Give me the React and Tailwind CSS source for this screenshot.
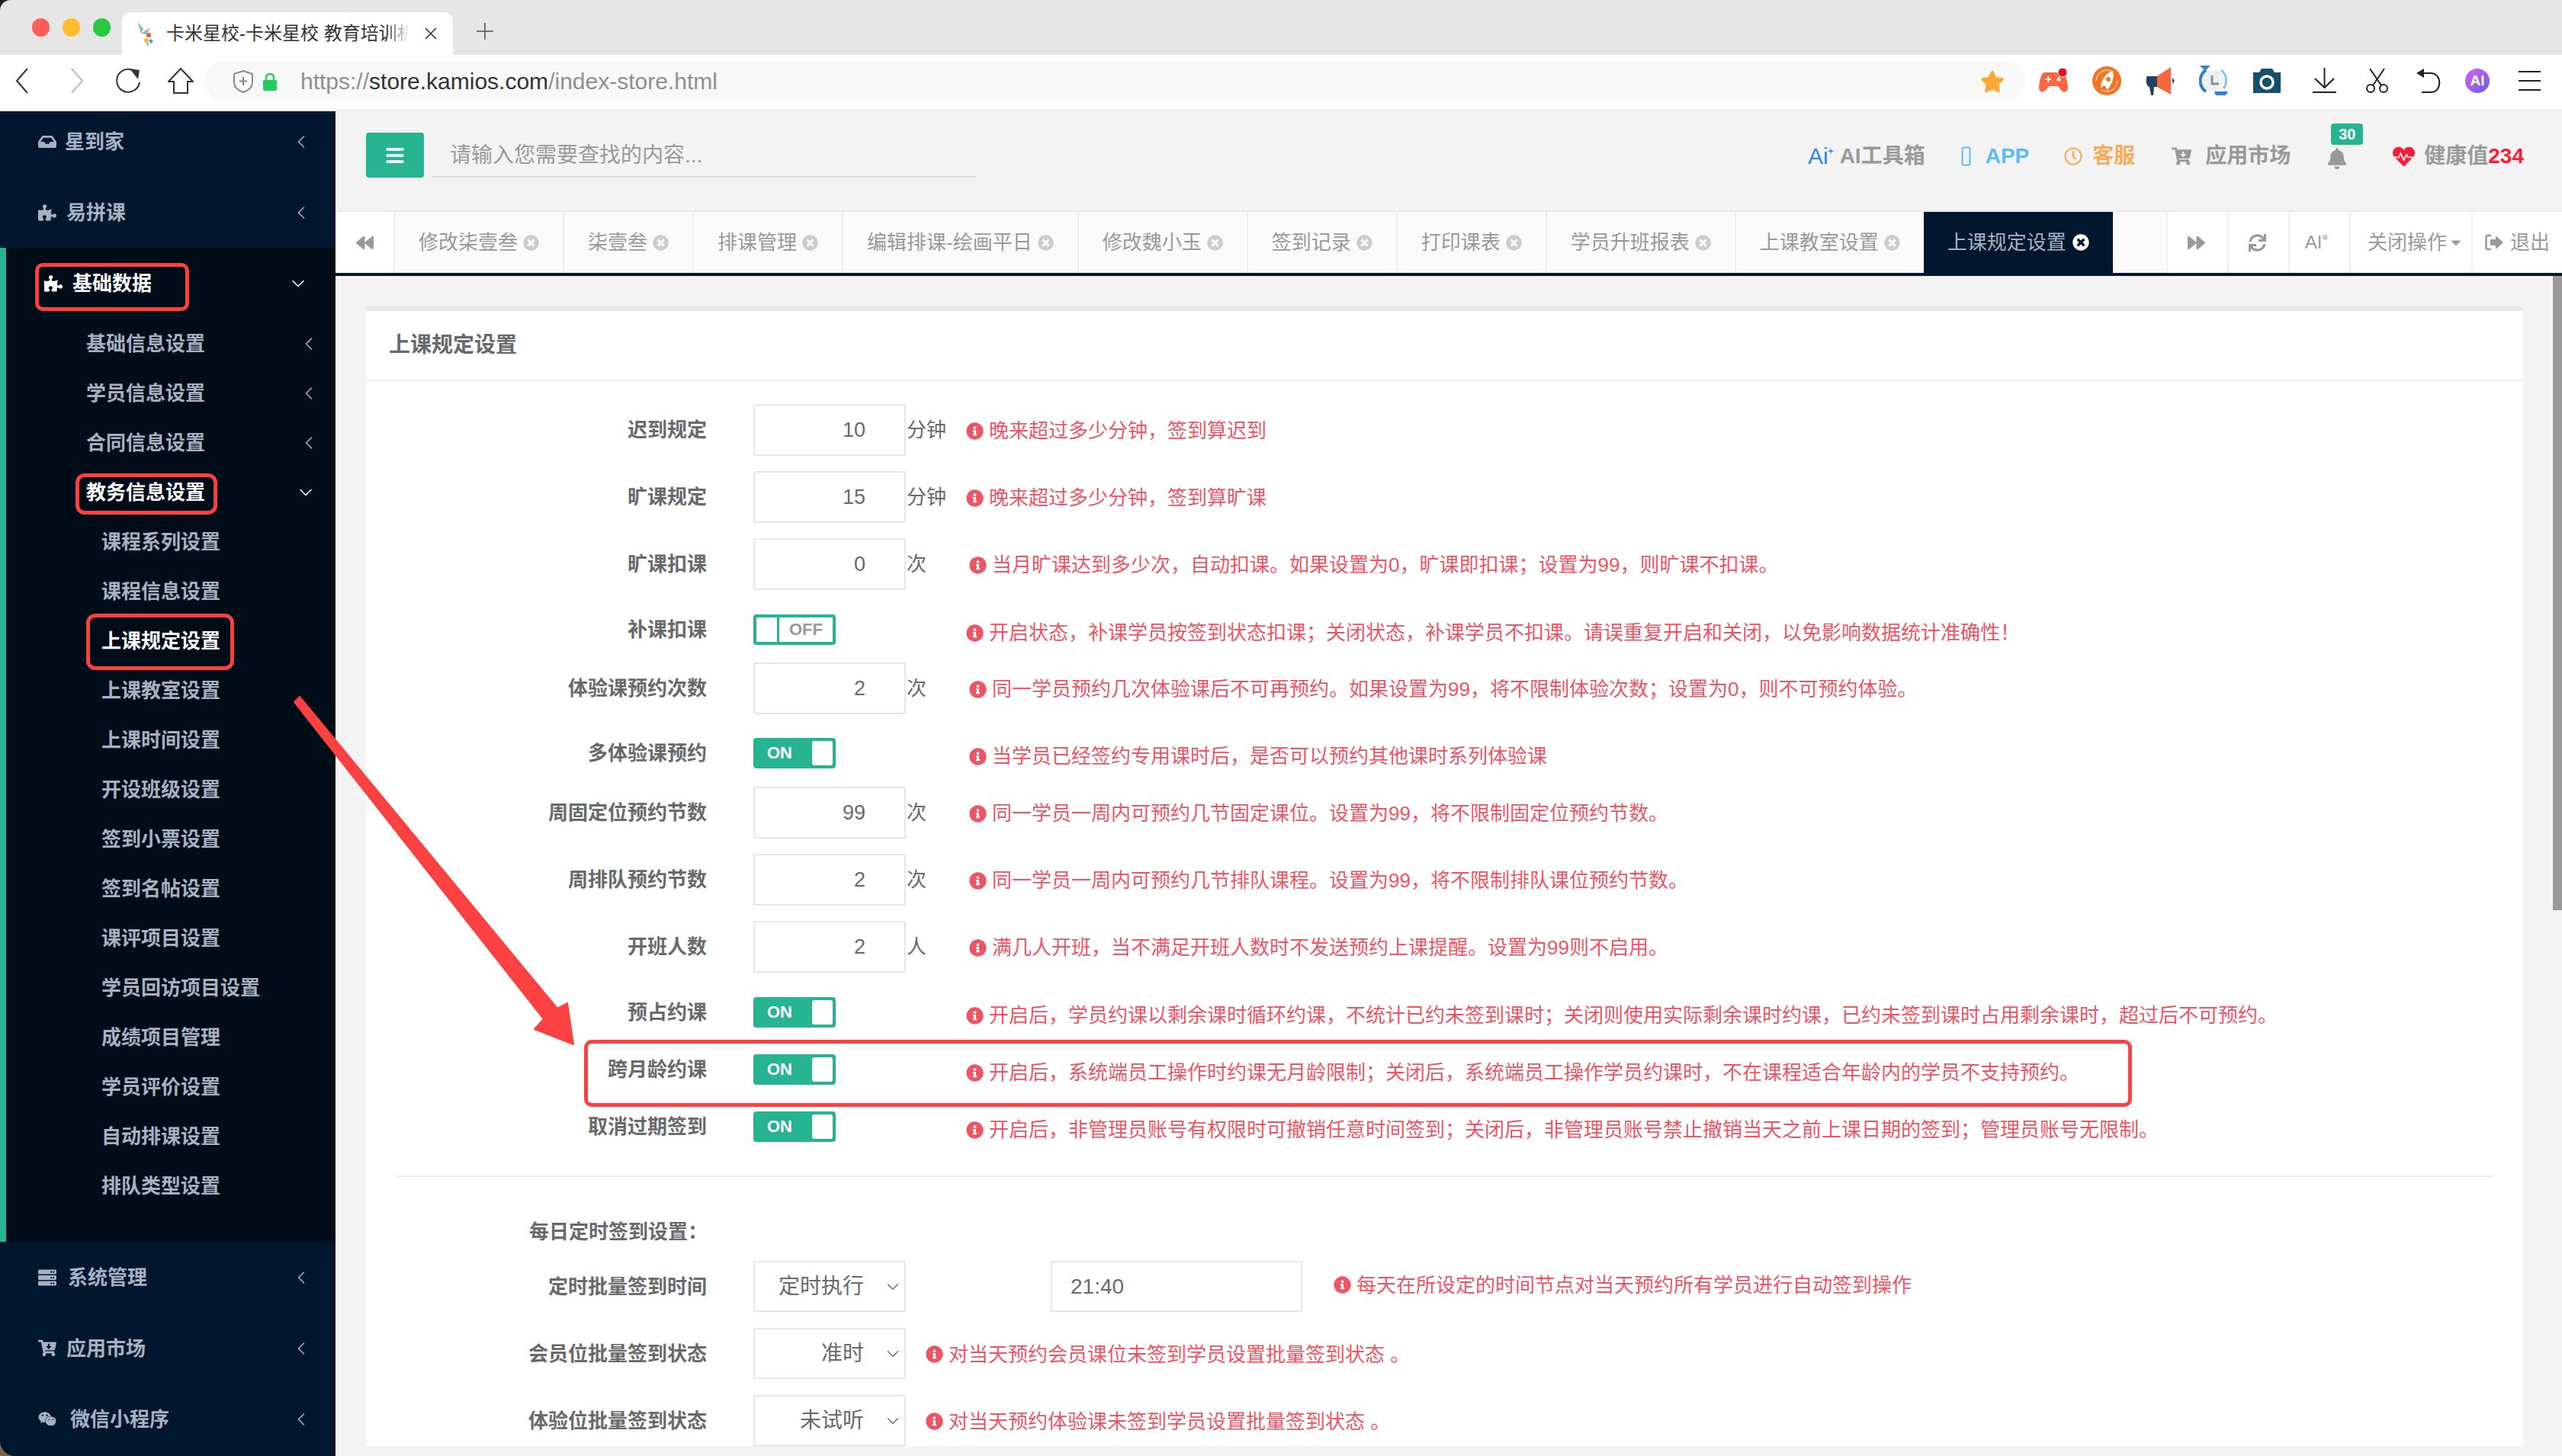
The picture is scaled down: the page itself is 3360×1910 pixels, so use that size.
import React from 'react';
import { FaBackward, FaBars, FaBell, FaCartArrowDown, FaForward, FaHeartbeat, FaInbox, FaInfoCircle, FaPuzzlePiece, FaRegClock, FaServer, FaSync, FaTimesCircle, FaWeixin, FaCaretDown, FaStar } from 'react-icons/fa';
import { ChevronLeft, ChevronDown } from 'lucide-react';

const FONT = "[font-family:'Liberation_Sans','Noto_Sans_CJK_SC',sans-serif]";

function BrowserChrome() {
    return (
        <div className="shrink-0">
            <div className="h-[72px] bg-[#e6e6e6] rounded-tl-[14px] flex items-end relative">
                <div className="flex items-center gap-[17px] absolute left-[42px] top-[24px]">
                    <span className="w-[23px] h-[24px] rounded-full bg-[#ff5f57]" />
                    <span className="w-[23px] h-[24px] rounded-full bg-[#febc2e]" />
                    <span className="w-[23px] h-[24px] rounded-full bg-[#28c840]" />
                </div>
                <div className="ml-[160px] w-[434px] h-[56px] bg-white rounded-t-[12px] flex items-center pl-[17px]">
                    <svg width="26" height="36" viewBox="0 0 26 36" className="shrink-0">
                        <path d="M3 2 L11 12 L8 18 Z" fill="#7cc4b0" />
                        <path d="M8 18 L20 10 L15 19 Z" fill="#8fb8a0" />
                        <circle cx="18" cy="20" r="3" fill="#e9573f" />
                        <circle cx="15" cy="27" r="3" fill="#f6bb42" />
                        <circle cx="21" cy="28" r="2.5" fill="#48a0dc" />
                        <path d="M15 30 L17 36 L18 30 Z" fill="#8cc152" />
                    </svg>
                    <div className="relative ml-[15px] w-[319px] h-[34px] overflow-hidden text-[24px] leading-[34px] text-[#333]">
                        <span className="block w-[330px] whitespace-nowrap">卡米星校-卡米星校 教育培训机</span>
                        <div className="absolute right-0 top-0 h-full w-[30px] bg-gradient-to-r from-transparent to-white" />
                    </div>
                    <svg width="18" height="18" viewBox="0 0 18 18" className="ml-[19px]" stroke="#333" strokeWidth="1.6">
                        <path d="M2 2 L16 16 M16 2 L2 16" />
                    </svg>
                </div>
                <svg width="24" height="24" viewBox="0 0 24 24" className="ml-[30px] mb-[19px]" stroke="#555" strokeWidth="1.6">
                    <path d="M12 1 V23 M1 12 H23" />
                </svg>
            </div>
            <div className="h-[72px] bg-white flex items-center relative">
                <svg width="17" height="34" viewBox="0 0 17 34" className="ml-[20px] mb-[4px]" fill="none" stroke="#333" strokeWidth="2">
                    <path d="M16 1 L2 17 L16 33" />
                </svg>
                <svg width="17" height="34" viewBox="0 0 17 34" className="ml-[56px] mb-[4px]" fill="none" stroke="#bbb" strokeWidth="2">
                    <path d="M1 1 L15 17 L1 33" />
                </svg>
                <svg width="35" height="34" viewBox="0 0 35 34" className="ml-[40px] mb-[4px]" fill="none" stroke="#333" strokeWidth="2">
                    <path d="M24 3 A15 15 0 1 0 33 19" />
                    <path d="M20 1 L33 3 L31 15 Z" fill="#333" stroke="none" />
                </svg>
                <svg width="34" height="34" viewBox="0 0 34 34" className="ml-[35px] mb-[4px]" fill="none" stroke="#333" strokeWidth="2">
                    <path d="M17 1 L33 18 H26 V33 H8 V18 H1 Z" />
                </svg>
                <div className="absolute left-[268px] top-[8px] w-[2388px] h-[53px] rounded-[26px] bg-[#f8f8f8] flex items-center">
                    <svg width="28" height="32" viewBox="0 0 28 32" className="ml-[37px]" fill="none" stroke="#888" strokeWidth="2">
                        <path d="M14 2 L26 6 V17 C26 24 20 28 14 30 C8 28 2 24 2 17 V6 Z" />
                        <path d="M14 10 V21 M9 15.5 H19" />
                    </svg>
                    <svg width="20" height="24" viewBox="0 0 20 24" className="ml-[11px]">
                        <path d="M5 11 V7 A5 5 0 0 1 15 7 V11" fill="none" stroke="#22cc5e" strokeWidth="2.5" />
                        <rect x="1" y="10" width="18" height="14" rx="2" fill="#22cc5e" />
                    </svg>
                    <div className="ml-[30px] text-[30px] leading-[40px] text-[#8f8f8f]">
                        https://<span className="text-[#333]">store.kamios.com</span>/index-store.html
                    </div>
                    <FaStar size={32} className="absolute right-[27px] top-[11px] text-[#ffa733]" />
                </div>
                <div className="absolute left-[2673px] top-[14px] flex items-center">
                    <svg width="40" height="33" viewBox="0 0 40 33">
                        <path d="M8 6 H32 C36 6 39 20 39 27 C38 33 32 33 29 28 L26 24 H14 L11 28 C8 33 2 33 1 27 C1 20 4 6 8 6 Z" fill="#ff6640" />
                        <path d="M9 15 H17 M13 11 V19" stroke="#fff" strokeWidth="2" />
                        <circle cx="27" cy="15" r="2.5" fill="#fff" />
                        <circle cx="32" cy="6" r="6" fill="#e81123" stroke="#fff" />
                    </svg>
                    <svg width="38" height="38" viewBox="0 0 38 38" className="ml-[31px]">
                        <circle cx="19" cy="19" r="19" fill="#f47521" />
                        <circle cx="19" cy="19" r="14" fill="none" stroke="#fff" strokeWidth="1" strokeDasharray="30 14" />
                        <path d="M27 6 C18 9 12 16 11 28 L16 25 L20 31 C26 23 29 15 27 6 Z" fill="#fff" />
                        <circle cx="21" cy="17" r="3" fill="#f47521" />
                    </svg>
                    <svg width="38" height="38" viewBox="0 0 38 38" className="ml-[32px]">
                        <path d="M2 13 H15 V27 H11 L10 38 H7 L5 27 C0 27 0 13 2 13 Z" fill="#25415e" />
                        <path d="M15 13 L33 1 V37 L15 27 Z" fill="#f7673c" />
                        <path d="M35 15 L38 19 L35 23 Z" fill="#25415e" />
                    </svg>
                    <svg width="38" height="39" viewBox="0 0 38 39" className="ml-[32px]">
                        <circle cx="19" cy="20" r="14" fill="#eef1f4" />
                        <path d="M9 6 A17 17 0 0 0 9 34" fill="none" stroke="#2f7ed8" strokeWidth="4" />
                        <path d="M29 6 A17 17 0 0 1 32 30" fill="none" stroke="#8fc0ee" strokeWidth="3" />
                        <path d="M17 13 V24 H26" fill="none" stroke="#8a8f94" strokeWidth="3" />
                        <path d="M20 34 H38 L35 39 H22 Z" fill="#2f7ed8" />
                        <path d="M1 0 H15 L8 7 Z" fill="#2f7ed8" />
                    </svg>
                    <svg width="38" height="32" viewBox="0 0 38 32" className="ml-[32px]">
                        <path d="M1 5 H9 L12 0 H26 L29 5 H37 V32 H1 Z" fill="#12506c" />
                        <circle cx="19" cy="18" r="8" fill="none" stroke="#fff" strokeWidth="3.5" />
                    </svg>
                    <svg width="31" height="33" viewBox="0 0 31 33" className="ml-[41px]" fill="none" stroke="#222" strokeWidth="2">
                        <path d="M15.5 0 V26 M3 14 L15.5 26 L28 14 M0 32 H31" />
                    </svg>
                    <svg width="31" height="33" viewBox="0 0 31 33" className="ml-[38px]" fill="none" stroke="#222" strokeWidth="2">
                        <path d="M6 1 L21 23 M25 1 L10 23" />
                        <circle cx="7" cy="27" r="5" />
                        <circle cx="24" cy="27" r="5" />
                    </svg>
                    <svg width="32" height="32" viewBox="0 0 32 32" className="ml-[36px]" fill="none" stroke="#222" strokeWidth="2">
                        <path d="M8 6 H19 C34 6 34 31 19 31 H7" />
                        <path d="M10 0 L0 6 L10 12 Z" fill="#222" stroke="none" />
                    </svg>
                    <div className="ml-[32px] w-[32px] h-[32px] rounded-full bg-gradient-to-br from-[#e05cf0] to-[#5a5cf0] text-white text-[19px] leading-[32px] text-center font-bold">AI</div>
                    <svg width="29" height="26" viewBox="0 0 29 26" className="ml-[38px]" stroke="#222" strokeWidth="2">
                        <path d="M0 1 H29 M0 13 H29 M0 25 H29" />
                    </svg>
                </div>
            </div>
            <div className="h-[2px] bg-[#e7eaec]" />
        </div>
    );
}

function SideItem({ icon, label, boxClass = 'h-[93px]', textClass = 'ml-[13px]' }) {
    return (
        <div className={`flex items-center pl-[50px] pr-[31px] text-[#a7b1c2] ${boxClass}`}>
            <span className="w-[24px] flex items-center">{icon}</span>
            <span className={`text-[26px] leading-[36px] font-semibold ${textClass}`}>{label}</span>
            <ChevronLeft size={28} strokeWidth={1.3} className="ml-auto" />
        </div>
    );
}

const SUB_MENU = ['基础信息设置', '学员信息设置', '合同信息设置'];
const SUB_SUB_MENU = ['课程系列设置', '课程信息设置', '上课规定设置', '上课教室设置', '上课时间设置', '开设班级设置', '签到小票设置', '签到名帖设置', '课评项目设置', '学员回访项目设置', '成绩项目管理', '学员评价设置', '自动排课设置', '排队类型设置'];

function Sidebar() {
    return (
        <aside className="w-[440px] shrink-0 bg-[#00172d] rounded-bl-[20px] overflow-hidden">
            <SideItem icon={<FaInbox size={24} />} label="星到家" boxClass="h-[86px] pb-[6px]" textClass="ml-[11px]" />
            <SideItem icon={<FaPuzzlePiece size={24} />} label="易拼课" />
            <div className="bg-[#000c17] border-l-[8px] border-[#26b493] pb-[41px]">
                <div className="h-[93px] flex items-center pl-[50px] pr-[35px] text-white">
                    <FaPuzzlePiece size={24} />
                    <span className="ml-[13px] text-[26px] leading-[36px] font-bold">基础数据</span>
                    <ChevronDown size={28} strokeWidth={1.3} className="ml-auto" />
                </div>
                {SUB_MENU.map((m) => (
                    <div key={m} className="h-[65px] flex items-center pl-[105px] pr-[21px] text-[#a7b1c2]">
                        <span className="text-[26px] leading-[36px] font-semibold">{m}</span>
                        <ChevronLeft size={28} strokeWidth={1.3} className="ml-auto" />
                    </div>
                ))}
                <div className="h-[65px] flex items-center pl-[105px] pr-[25px] text-white">
                    <span className="text-[26px] leading-[36px] font-bold">教务信息设置</span>
                    <ChevronDown size={28} strokeWidth={1.3} className="ml-auto" />
                </div>
                {SUB_SUB_MENU.map((m) => (
                    <div key={m} className={`h-[65px] flex items-center pl-[125px] text-[26px] leading-[36px] ${m === '上课规定设置' ? 'text-white font-bold' : 'text-[#a7b1c2] font-semibold'}`}>
                        {m}
                    </div>
                ))}
            </div>
            <SideItem icon={<FaServer size={26} />} label="系统管理" textClass="ml-[15px]" />
            <SideItem icon={<FaCartArrowDown size={25} />} label="应用市场" />
            <SideItem icon={<FaWeixin size={29} />} label="微信小程序" textClass="ml-[18px]" />
        </aside>
    );
}

function TopBar() {
    return (
        <div className="h-[130px] shrink-0 flex items-start pl-[40px] pr-[50px] pt-[28px]">
            <div className="w-[76px] h-[59px] rounded-[4px] bg-[#26b493] flex items-center justify-center text-white">
                <FaBars size={26} />
            </div>
            <div className="ml-[10px] w-[714px] h-[59px] border-b-[2px] border-[#dcdcdc] pl-[24px] text-[28px] leading-[60px] text-[#999]">
                请输入您需要查找的内容...
            </div>
            <div className="ml-auto flex items-center h-[62px] text-[28px] leading-[36px] font-semibold text-[#999]">
                <span className="text-[#2b86e0] text-[30px] leading-[36px] font-normal">Ai</span>
                <svg width="10" height="22" viewBox="0 0 12 22" className="-mt-[12px] -ml-[2px] mr-[7px]">
                    <path d="M6 4 L7 9 L12 10 L7 11 L6 16 L5 11 L0 10 L5 9 Z" fill="#2b86e0" />
                </svg>
                <span>AI工具箱</span>
                <svg width="13" height="26" viewBox="0 0 13 26" className="ml-[47px]" fill="none" stroke="#5bbcf5" strokeWidth="2">
                    <rect x="1.5" y="1.5" width="10" height="23" rx="2" />
                </svg>
                <span className="ml-[19px] text-[#5bbcf5]">APP</span>
                <FaRegClock size={24} className="ml-[46px] text-[#f8ac59]" />
                <span className="ml-[13px] text-[#f8ac59]">客服</span>
                <FaCartArrowDown size={26} className="ml-[48px]" />
                <span className="ml-[18px]">应用市场</span>
                <div className="relative ml-[47px]">
                    <FaBell size={28} className="mt-[6px]" />
                    <span className="absolute left-[6px] -top-[26px] w-[42px] h-[28px] rounded-[4px] bg-[#26b493] text-white text-[20px] leading-[28px] font-bold text-center">30</span>
                </div>
                <FaHeartbeat size={29} className="ml-[59px] text-[#ff1a35]" />
                <span className="ml-[12px]">健康值</span>
                <span className="text-[#ff1a35] font-bold">234</span>
            </div>
        </div>
    );
}

const TABS = ['修改柒壹叁', '柒壹叁', '排课管理', '编辑排课-绘画平日', '修改魏小玉', '签到记录', '打印课表', '学员升班报表', '上课教室设置'];

function TabBar() {
    return (
        <div className="shrink-0 border-t-[2px] border-[#e7eaec] border-b-[4px] border-b-[#00172d] bg-[#fafafa] h-[86px] flex text-[26px] leading-[36px] text-[#999]">
            <div className="w-[78px] flex items-center justify-center bg-white border-r-[2px] border-[#eeeeee]">
                <FaBackward size={23} />
            </div>
            {TABS.map((t) => (
                <div key={t} className="flex items-center px-[31px] border-r-[2px] border-[#eeeeee] whitespace-nowrap">
                    <span>{t}</span>
                    <FaTimesCircle size={21} className="ml-[7px] text-[#cccccc]" />
                </div>
            ))}
            <div className="flex items-center px-[31px] bg-[#00172d] text-[#a7b1c2] whitespace-nowrap -ml-[2px]">
                <span>上课规定设置</span>
                <FaTimesCircle size={22} className="ml-[8px] text-white" />
            </div>
            <div className="ml-auto flex bg-white">
                <div className="w-[80px] flex items-center justify-center border-l-[2px] border-[#eeeeee] pr-[3px]"><FaForward size={23} /></div>
                <div className="w-[80px] flex items-center justify-center border-l-[2px] border-[#eeeeee] pr-[3px]"><FaSync size={23} /></div>
                <div className="w-[80px] flex items-center justify-center border-l-[2px] border-[#eeeeee] text-[24px] pr-[8px]">
                    AI<span className="text-[10px] leading-[10px] -mt-[12px]">✲</span>
                </div>
                <div className="w-[160px] flex items-center pl-[22px] border-l-[2px] border-[#eeeeee]">
                    关闭操作<FaCaretDown size={20} className="ml-[2px]" />
                </div>
                <div className="w-[119px] flex items-center pl-[16px] border-l-[2px] border-[#eeeeee]">
                    <svg width="25" height="22" viewBox="0 0 25 22" fill="none" stroke="#999" strokeWidth="2.5">
                        <path d="M8 2 H3 C2 2 1.500 3 1.500 4 V18 C1.500 19 2 20 3 20 H8" />
                        <path d="M7 7 H14 V2 L24 11 L14 20 V15 H7 Z" fill="#999" stroke="none" />
                    </svg>
                    <span className="ml-[8px]">退出</span>
                </div>
            </div>
        </div>
    );
}

function Hint({ text, className = '' }) {
    return (
        <div className={`flex items-center text-[#ed5565] text-[26px] leading-[36px] whitespace-nowrap ${className}`}>
            <FaInfoCircle size={23} className="shrink-0" />
            <span className="ml-[7px]">{text}</span>
        </div>
    );
}

function NumberInput({ value, unit }) {
    return (
        <>
            <div className="w-[200px] h-[68px] border-[2px] border-[#e5e6e7] rounded-[2px] text-right pr-[51px] text-[27px] leading-[64px] text-[#676a6c]">{value}</div>
            <span className="ml-[1px] text-[26px] leading-[36px] text-[#676a6c]">{unit}</span>
        </>
    );
}

function Toggle({ on }) {
    if (on) {
        return (
            <div className="w-[108px] h-[40px] rounded-[4px] bg-[#26b493] flex items-center justify-between pl-[18px] pr-[4px] py-[4px]">
                <span className="text-white text-[22px] font-bold leading-none">ON</span>
                <span className="w-[27px] h-[32px] rounded-[3px] bg-white" />
            </div>
        );
    }
    return (
        <div className="w-[108px] h-[40px] rounded-[4px] border-[4px] border-[#26b493] bg-white flex items-center">
            <span className="w-[30px] h-full border-r-[3px] border-[#26b493]" />
            <span className="ml-[13px] text-[#999] text-[22px] font-bold leading-none">OFF</span>
        </div>
    );
}

function Row({ label, children, hint, className = '', hintClass = '', ctrlClass = 'w-[279px]' }) {
    return (
        <div className={`flex items-center ${className}`}>
            <div className="w-[447px] shrink-0 text-right text-[26px] leading-[36px] font-semibold text-[#676a6c]">{label}</div>
            <div className={`ml-[61px] shrink-0 flex items-center ${ctrlClass}`}>{children}</div>
            <Hint text={hint} className={hintClass} />
        </div>
    );
}

function SelectBox({ value }) {
    return (
        <div className="w-[200px] h-[67px] border-[2px] border-[#e5e6e7] rounded-[2px] flex items-center justify-end text-[28px] leading-[40px] text-[#676a6c] pr-[2px]">
            <span>{value}</span>
            <ChevronDown size={26} strokeWidth={1.3} className="ml-[25px]" />
        </div>
    );
}

function Card() {
    return (
        <div className="mt-[40px] ml-[40px] w-[2829px] bg-white border-t-[6px] border-[#e7eaec]">
            <div className="h-[92px] border-b-[2px] border-[#eeeeee] pl-[30px] pt-[27px] text-[28px] leading-[36px] text-[#676a6c] font-semibold">上课规定设置</div>
            <div className="pt-[30px]">
                <Row label="迟到规定" hint="晚来超过多少分钟，签到算迟到" hintClass="pt-[2px]"><NumberInput value="10" unit="分钟" /></Row>
                <Row label="旷课规定" hint="晚来超过多少分钟，签到算旷课" className="mt-[20px]" hintClass="pt-[2px]"><NumberInput value="15" unit="分钟" /></Row>
                <Row label="旷课扣课" hint="当月旷课达到多少次，自动扣课。如果设置为0，旷课即扣课；设置为99，则旷课不扣课。" className="mt-[20px]" hintClass="pt-[2px] ml-[4px]"><NumberInput value="0" unit="次" /></Row>
                <Row label="补课扣课" hint="开启状态，补课学员按签到状态扣课；关闭状态，补课学员不扣课。请误重复开启和关闭，以免影响数据统计准确性！" className="mt-[32px] h-[40px]" hintClass="pt-[8px]"><Toggle on={false} /></Row>
                <Row label="体验课预约次数" hint="同一学员预约几次体验课后不可再预约。如果设置为99，将不限制体验次数；设置为0，则不可预约体验。" className="mt-[23px]" hintClass="pt-[2px] ml-[4px]"><NumberInput value="2" unit="次" /></Row>
                <Row label="多体验课预约" hint="当学员已经签约专用课时后，是否可以预约其他课时系列体验课" className="mt-[31px] h-[40px]" hintClass="pt-[8px] ml-[4px]"><Toggle on /></Row>
                <Row label="周固定位预约节数" hint="同一学员一周内可预约几节固定课位。设置为99，将不限制固定位预约节数。" className="mt-[24px]" hintClass="pt-[2px] ml-[4px]"><NumberInput value="99" unit="次" /></Row>
                <Row label="周排队预约节数" hint="同一学员一周内可预约几节排队课程。设置为99，将不限制排队课位预约节数。" className="mt-[20px]" hintClass="pt-[2px] ml-[4px]"><NumberInput value="2" unit="次" /></Row>
                <Row label="开班人数" hint="满几人开班，当不满足开班人数时不发送预约上课提醒。设置为99则不启用。" className="mt-[20px]" hintClass="pt-[2px] ml-[4px]"><NumberInput value="2" unit="人" /></Row>
                <Row label="预占约课" hint="开启后，学员约课以剩余课时循环约课，不统计已约未签到课时；关闭则使用实际剩余课时约课，已约未签到课时占用剩余课时，超过后不可预约。" className="mt-[32px] h-[40px]" hintClass="pt-[8px]"><Toggle on /></Row>
                <Row label="跨月龄约课" hint="开启后，系统端员工操作时约课无月龄限制；关闭后，系统端员工操作学员约课时，不在课程适合年龄内的学员不支持预约。" className="mt-[35px] h-[40px]" hintClass="pt-[8px]"><Toggle on /></Row>
                <Row label="取消过期签到" hint="开启后，非管理员账号有权限时可撤销任意时间签到；关闭后，非管理员账号禁止撤销当天之前上课日期的签到；管理员账号无限制。" className="mt-[35px] h-[40px]" hintClass="pt-[8px]"><Toggle on /></Row>
                <div className="mt-[44px] mx-[39px] h-[2px] bg-[#eeeeee]" />
                <div className="mt-[54px] pl-[214px] text-[26px] leading-[36px] font-semibold text-[#676a6c]">每日定时签到设置：</div>
                <Row label="定时批量签到时间" hint="每天在所设定的时间节点对当天预约所有学员进行自动签到操作" className="mt-[20px]" ctrlClass="w-[761px]" hintClass="pb-[4px]">
                    <SelectBox value="定时执行" />
                    <div className="ml-[190px] w-[330px] h-[67px] border-[2px] border-[#e5e6e7] rounded-[2px] pl-[24px] text-[28px] leading-[63px] text-[#676a6c]">21:40</div>
                </Row>
                <Row label="会员位批量签到状态" hint="对当天预约会员课位未签到学员设置批量签到状态 。" className="mt-[21px]" ctrlClass="w-[226px]" hintClass="pt-[2px]"><SelectBox value="准时" /></Row>
                <Row label="体验位批量签到状态" hint="对当天预约体验课未签到学员设置批量签到状态 。" className="mt-[21px]" ctrlClass="w-[226px]" hintClass="pt-[2px]"><SelectBox value="未试听" /></Row>
            </div>
        </div>
    );
}

function Annotations() {
    const box = 'absolute border-[5px] border-[#fb4141] pointer-events-none';
    return (
        <>
            <div className={`${box} left-[46px] top-[345px] w-[202px] h-[63px] rounded-[10px]`} />
            <div className={`${box} left-[99px] top-[621px] w-[186px] h-[54px] rounded-[12px]`} />
            <div className={`${box} left-[113px] top-[805px] w-[194px] h-[74px] rounded-[12px]`} />
            <div className={`${box} left-[766px] top-[1364px] w-[2030px] h-[88px] rounded-[10px]`} />
            <svg width="3360" height="1910" viewBox="0 0 3360 1910" className="absolute left-0 top-0 pointer-events-none">
                <path d="M386 921 L393 914 L731 1323 L744 1316 L752 1370 L701 1350 L713 1337 Z" fill="#fb4141" stroke="#fb4141" strokeWidth="2" strokeLinejoin="round" />
            </svg>
        </>
    );
}

export default function App() {
    return (
        <div className={`relative w-[3360px] h-[1910px] overflow-hidden flex flex-col bg-gradient-to-b from-[#222222] to-[#7a6650] ${FONT}`}>
            <BrowserChrome />
            <div className="flex-1 flex min-h-0">
                <Sidebar />
                <main className="flex-1 min-w-0 flex flex-col bg-[#f3f3f4] relative">
                    <TopBar />
                    <TabBar />
                    <div className="flex-1 overflow-hidden">
                        <Card />
                    </div>
                    <div className="absolute right-0 top-[216px] w-[12px] h-[832px] bg-[#9a9a9a]" />
                </main>
            </div>
            <Annotations />
        </div>
    );
}
